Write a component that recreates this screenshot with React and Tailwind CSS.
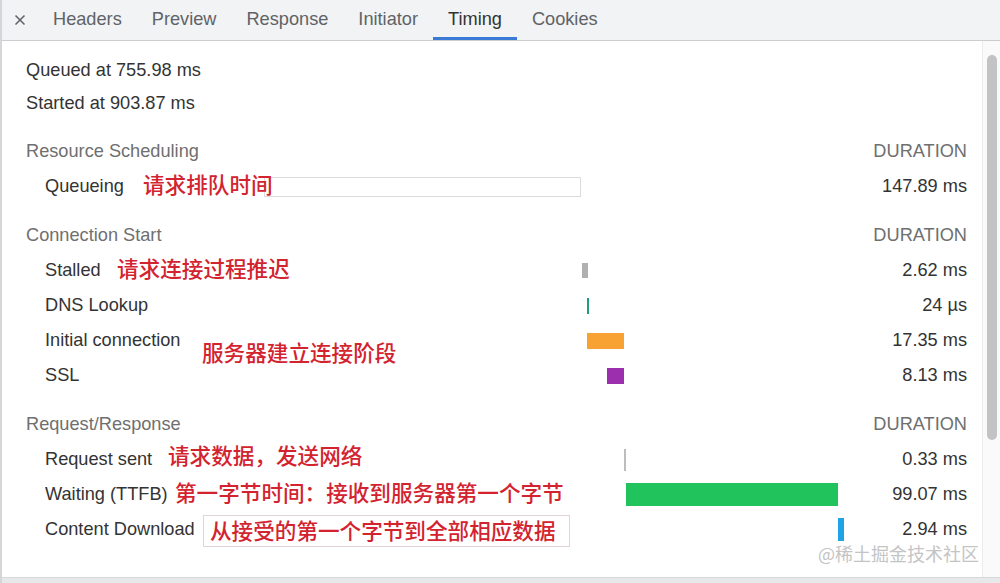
import { X } from 'lucide-react';

const tabs = ['Headers', 'Preview', 'Response', 'Initiator', 'Timing', 'Cookies'];

const sections = [
  {
    title: 'Resource Scheduling',
    rows: [{ label: 'Queueing', duration: '147.89 ms', bar: 'ml-0 w-[317px] h-[20px] bg-white border border-[#dcdcdc]' }],
  },
  {
    title: 'Connection Start',
    rows: [
      { label: 'Stalled', duration: '2.62 ms', bar: 'ml-[318px] w-[6px] h-[15px] bg-[#b0b0b0]' },
      { label: 'DNS Lookup', duration: '24 µs', bar: 'ml-[323px] w-[2px] h-[16px] bg-[#1e9e7e]' },
      { label: 'Initial connection', duration: '17.35 ms', bar: 'ml-[323px] w-[37px] h-[16px] bg-[#f7a232]' },
      { label: 'SSL', duration: '8.13 ms', bar: 'ml-[343px] w-[17px] h-[16px] bg-[#9b2fae]' },
    ],
  },
  {
    title: 'Request/Response',
    rows: [
      { label: 'Request sent', duration: '0.33 ms', bar: 'ml-[360px] w-[2px] h-[22px] bg-[#bdbdbd]' },
      { label: 'Waiting (TTFB)', duration: '99.07 ms', bar: 'ml-[362px] w-[212px] h-[23px] bg-[#20c35c]' },
      { label: 'Content Download', duration: '2.94 ms', bar: 'ml-[574px] w-[6px] h-[23px] bg-[#1fa3e4]' },
    ],
  },
];

// 红色批注，盖在表格上面
const notes = [
  { text: '请求排队时间', cls: 'left-[141px] top-[172px]' },
  { text: '请求连接过程推迟', cls: 'left-[115px] top-[256px]' },
  { text: '服务器建立连接阶段', cls: 'left-[200px] top-[340px]' },
  { text: '请求数据，发送网络', cls: 'left-[166px] top-[443px]' },
  { text: '第一字节时间：接收到服务器第一个字节', cls: 'left-[173px] top-[480px]' },
];

export default function App() {
  return (
    <div
      className="relative w-[1000px] h-[583px] flex flex-col overflow-hidden bg-white border-l-2 border-[#d4d6d9]"
      style={{ fontFamily: '"Liberation Sans", Arial, "Noto Sans CJK SC", sans-serif' }}
    >
      {/* Tabs */}
      <div className="h-[41px] shrink-0 flex items-stretch bg-[#f1f3f4] border-b border-[#cbcdd1] text-[18.2px] text-[#5f6368]">
        <div className="w-[36px] flex items-center justify-center">
          <X className="w-[16px] h-[16px] text-[#5f6368]" strokeWidth={2.5} />
        </div>
        {tabs.map((t) => (
          <div
            key={t}
            className={
              t === 'Timing'
                ? 'px-[15px] flex items-center text-[#333] border-b-[3px] border-[#3a7bd5] pt-[3px]'
                : 'px-[15px] flex items-center'
            }
          >
            {t}
          </div>
        ))}
      </div>

      <div className="flex-1 flex min-h-0">
        {/* Content */}
        <div className="flex-1 pt-[13px] pl-[24px] pr-[15px] text-[18.2px] text-[#333] border-r border-[#ececec]">
          <div className="h-[33px] flex items-center">Queued at 755.98 ms</div>
          <div className="h-[33px] flex items-center">Started at 903.87 ms</div>

          {sections.map((s) => (
            <div key={s.title} className="mt-[15px]">
              <div className="h-[34px] flex items-center justify-between text-[#6f6f6f]">
                <span>{s.title}</span>
                <span>DURATION</span>
              </div>
              {s.rows.map((r) => (
                <div key={r.label} className="h-[35px] flex items-center">
                  <div className="w-[238px] pl-[19px] shrink-0 whitespace-nowrap">{r.label}</div>
                  <div className="flex-1 flex items-center">
                    <div className={r.bar} />
                  </div>
                  <div className="w-[120px] text-right">{r.duration}</div>
                </div>
              ))}
            </div>
          ))}
        </div>

        {/* Scrollbar */}
        <div className="w-[17px] shrink-0 bg-[#fafafa] pt-[14px] pl-[4px]">
          <div className="w-[10px] h-[385px] rounded-full bg-[#c1c3c4]" />
        </div>
      </div>

      <div className="h-[6px] shrink-0 bg-[#e6e8ea] border-t border-[#d6d8da]" />

      {notes.map((n) => (
        <div
          key={n.text}
          className={`absolute ${n.cls} text-[21.6px] leading-[24px] font-medium text-[#d3232f] whitespace-nowrap`}
          style={{ fontFamily: '"Noto Sans CJK SC", sans-serif' }}
        >
          {n.text}
        </div>
      ))}

      <div
        className="absolute left-[201px] top-[515px] w-[367px] h-[32px] pl-[6px] bg-white border border-[#e2d3d5] text-[21.6px] leading-[28px] font-medium text-[#d3232f] whitespace-nowrap"
        style={{ fontFamily: '"Noto Sans CJK SC", sans-serif' }}
      >
        从接受的第一个字节到全部相应数据
      </div>

      <div
        className="absolute left-[816px] top-[541px] text-[18px] leading-[24px] text-[#c4c4c4]"
        style={{ fontFamily: '"Noto Sans CJK SC", sans-serif' }}
      >
        @稀土掘金技术社区
      </div>
    </div>
  );
}
